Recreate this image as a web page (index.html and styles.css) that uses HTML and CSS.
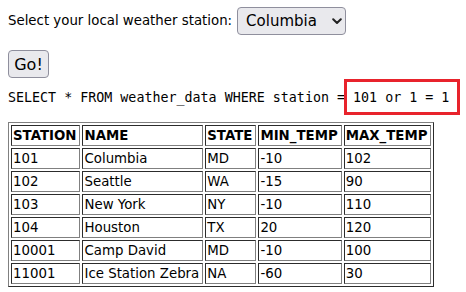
FILE: index.html
```html
<!DOCTYPE html>
<html>
<head>
<meta charset="utf-8">
<link rel="stylesheet" href="styles.css">
</head>
<body>
<div class="page">
  <form class="station-form">
    <label class="label" for="station">Select your local weather station:</label>
    <span class="select-wrap">
      <select id="station" class="select">
        <option>Columbia</option>
      </select>
      <svg class="chevron" width="10" height="7" viewBox="0 0 10 7"><path d="M1.2 1.2 L5 5 L8.8 1.2" fill="none" stroke="#222" stroke-width="2" stroke-linecap="round" stroke-linejoin="round"/></svg>
    </span>
  </form>
  <div><button class="go" type="button">Go!</button></div>
  <div class="sql">SELECT * FROM weather_data WHERE station = <span class="inject">101 or 1 = 1</span></div>
  <table class="data">
    <tr><th>STATION</th><th>NAME</th><th>STATE</th><th>MIN_TEMP</th><th>MAX_TEMP</th></tr>
    <tr><td>101</td><td>Columbia</td><td>MD</td><td>-10</td><td>102</td></tr>
    <tr><td>102</td><td>Seattle</td><td>WA</td><td>-15</td><td>90</td></tr>
    <tr><td>103</td><td>New York</td><td>NY</td><td>-10</td><td>110</td></tr>
    <tr><td>104</td><td>Houston</td><td>TX</td><td>20</td><td>120</td></tr>
    <tr><td>10001</td><td>Camp David</td><td>MD</td><td>-10</td><td>100</td></tr>
    <tr><td>11001</td><td>Ice Station Zebra</td><td>NA</td><td>-60</td><td>30</td></tr>
  </table>
</div>
</body>
</html>
```
FILE: styles.css
```css
html, body {
  margin: 0;
  background: #ffffff;
}
body {
  font-family: "DejaVu Sans", sans-serif;
  font-size: 13.33px;
  color: #000;
}
.page {
  display: flex;
  flex-direction: column;
  align-items: flex-start;
  padding: 7px 8px 0 8px;
}
.station-form {
  display: flex;
  align-items: center;
  gap: 5px;
  margin: 0;
  height: 28px;
}
.label {
  line-height: 16px;
}
.select-wrap {
  position: relative;
  display: inline-block;
}
.select {
  appearance: none;
  -webkit-appearance: none;
  font-family: "DejaVu Sans", sans-serif;
  font-size: 15px;
  color: #000;
  background: #e9e9ed;
  border: 1px solid #8f8f9d;
  border-radius: 4px;
  height: 28px;
  width: 109px;
  padding: 0 0 0 8px;
  margin: 0;
}
.chevron {
  position: absolute;
  right: 4px;
  top: 11px;
  pointer-events: none;
}
.go {
  margin-top: 15px;
  font-family: "DejaVu Sans", sans-serif;
  font-size: 16px;
  color: #000;
  background: #e9e9ed;
  border: 1px solid #8f8f9d;
  border-radius: 4px;
  height: 28px;
  width: 41px;
  padding: 0;
}
.sql {
  margin-top: 12px;
  font-family: "DejaVu Sans Mono", monospace;
  font-size: 13.33px;
  line-height: 16px;
  white-space: pre;
}
.inject {
  position: relative;
}
.inject::after {
  content: "";
  position: absolute;
  left: -9px;
  right: -11px;
  top: -11px;
  bottom: -10px;
  border: 3px solid #e8232c;
}
.data {
  margin-top: 16px;
  border: 1px outset #808080;
  border-spacing: 2px;
  font-size: 13.33px;
}
.data th, .data td {
  border: 1px inset #808080;
  padding: 2px 3px 2px 1px;
  text-align: left;
  line-height: 15px;
}
.data th {
  font-weight: bold;
}
```
